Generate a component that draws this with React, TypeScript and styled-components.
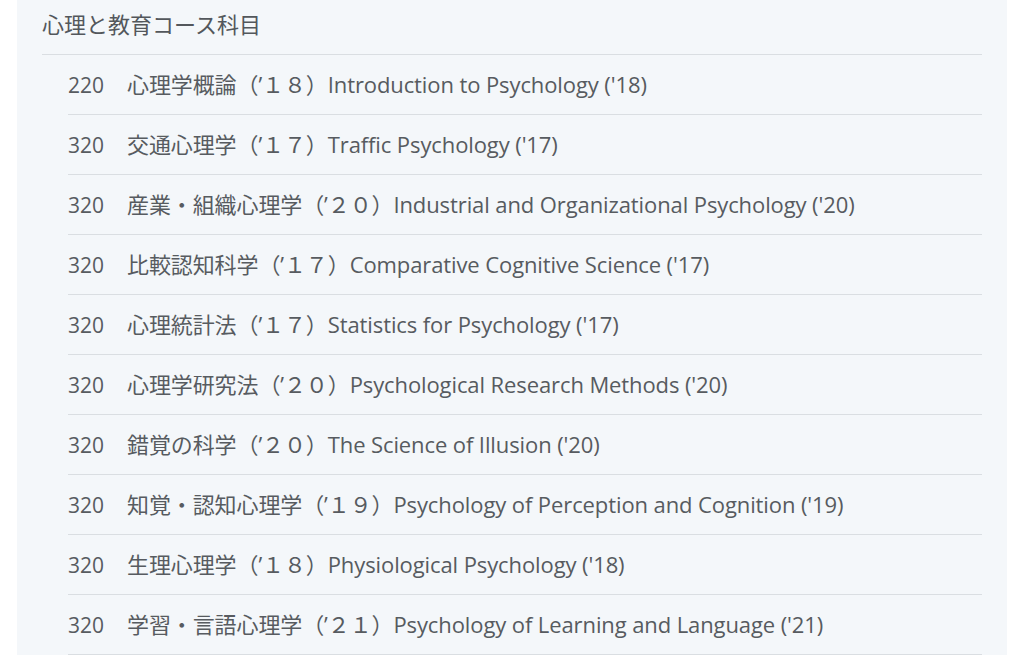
import * as React from 'react'
import styled, { createGlobalStyle } from 'styled-components'

const GlobalStyle = createGlobalStyle`
  html, body {
    margin: 0;
    padding: 0;
    background: #ffffff;
  }
  body {
    font-family: 'Open Sans', 'Noto Sans CJK JP', sans-serif;
    color: #575b60;
  }
`

const Panel = styled.section`
  margin-left: 17px;
  width: 990px;
  min-height: 655px;
  background: #f4f7fa;
  padding: 0 25px;
  box-sizing: border-box;
`

const Title = styled.h2`
  margin: 0;
  height: 55px;
  display: flex;
  align-items: center;
  padding-bottom: 8px;
  box-sizing: border-box;
  border-bottom: 1px solid #dadee2;
  font-size: 22px;
  font-weight: 400;
  color: #53575c;
`

const List = styled.ul`
  list-style: none;
  margin: 0;
  padding: 0 0 0 26px;
`

const Row = styled.li`
  height: 60px;
  box-sizing: border-box;
  border-bottom: 1px solid #dadee2;
  display: flex;
  align-items: center;
  padding-bottom: 4px;
  font-size: 22px;
  white-space: nowrap;
`

const Line = styled.div`
  display: flex;
  align-items: baseline;
`

const Code = styled.span`
  width: 59px;
  flex: none;
  font-size: 21px;
`

const Name = styled.span`
  letter-spacing: -0.1px;
`

const courses = [
  ['220', '心理学概論（’１８）Introduction to Psychology (\'18)'],
  ['320', '交通心理学（’１７）Traffic Psychology (\'17)'],
  ['320', '産業・組織心理学（’２０）Industrial and Organizational Psychology (\'20)'],
  ['320', '比較認知科学（’１７）Comparative Cognitive Science (\'17)'],
  ['320', '心理統計法（’１７）Statistics for Psychology (\'17)'],
  ['320', '心理学研究法（’２０）Psychological Research Methods (\'20)'],
  ['320', '錯覚の科学（’２０）The Science of Illusion (\'20)'],
  ['320', '知覚・認知心理学（’１９）Psychology of Perception and Cognition (\'19)'],
  ['320', '生理心理学（’１８）Physiological Psychology (\'18)'],
  ['320', '学習・言語心理学（’２１）Psychology of Learning and Language (\'21)'],
]

export default function App() {
  return (
    <>
      <GlobalStyle />
      <Panel>
        <Title>心理と教育コース科目</Title>
        <List>
          {courses.map(([code, name], i) => (
            <Row key={i}>
              <Line>
                <Code>{code}</Code>
                <Name>{name}</Name>
              </Line>
            </Row>
          ))}
        </List>
      </Panel>
    </>
  )
}
